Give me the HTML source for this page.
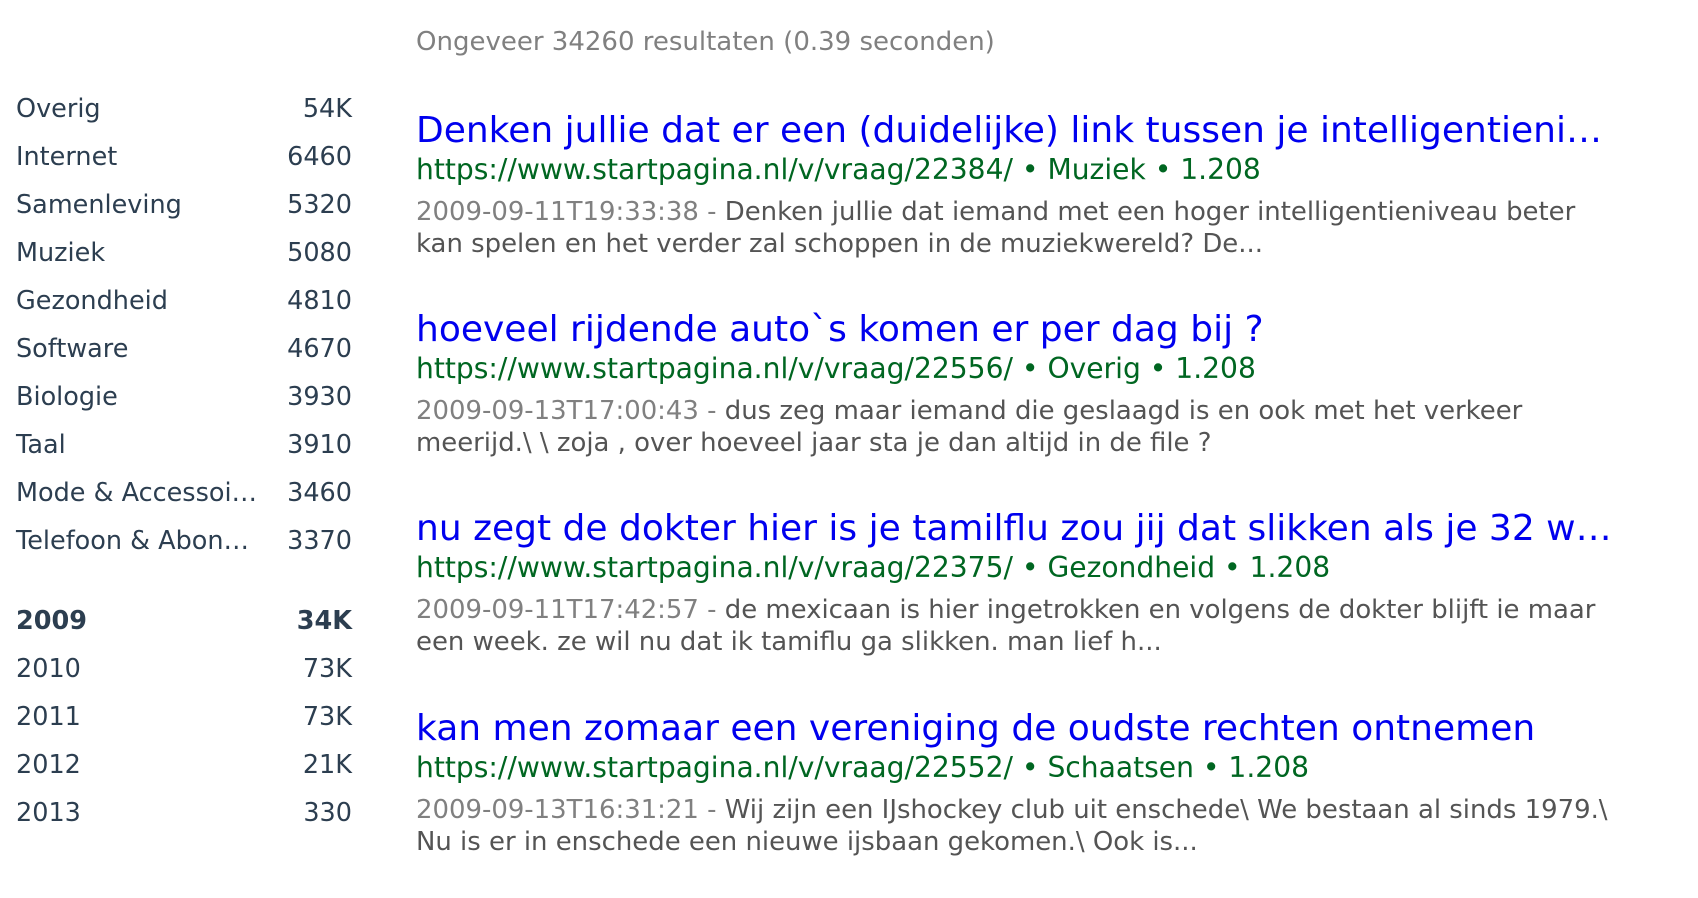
<!DOCTYPE html>
<html><head><meta charset="utf-8"><style>
html,body{margin:0;padding:0;background:#fff;width:1698px;height:898px;overflow:hidden;font-family:"DejaVu Sans","Liberation Sans",sans-serif;}
.l{position:absolute;left:16px;width:336px;height:40px;line-height:40px;font-size:25.5px;color:#2c3e50;}
.l span{position:absolute;right:0;top:0}
.b{font-weight:bold}
.hd{position:absolute;left:416px;top:24px;line-height:36px;font-size:26px;color:#808080;white-space:nowrap}
.r{position:absolute;left:416px;width:1204px}
.t{font-size:36px;color:#0000ee;line-height:44px;height:44px;white-space:nowrap;overflow:hidden;text-overflow:ellipsis}
.u{font-size:28.15px;color:#006621;line-height:36px;margin-top:-1px;white-space:nowrap}
.s{font-size:25.93px;color:#545454;line-height:31.5px;margin-top:9px;white-space:nowrap}
.s i{font-style:normal;color:#808080}
</style></head><body>
<div class="hd">Ongeveer 34260 resultaten (0.39 seconden)</div>

<div class="l" style="top:89px">Overig<span>54K</span></div>
<div class="l" style="top:137px">Internet<span>6460</span></div>
<div class="l" style="top:185px">Samenleving<span>5320</span></div>
<div class="l" style="top:233px">Muziek<span>5080</span></div>
<div class="l" style="top:281px">Gezondheid<span>4810</span></div>
<div class="l" style="top:329px">Software<span>4670</span></div>
<div class="l" style="top:377px">Biologie<span>3930</span></div>
<div class="l" style="top:425px">Taal<span>3910</span></div>
<div class="l" style="top:473px">Mode &amp; Accessoi…<span>3460</span></div>
<div class="l" style="top:521px">Telefoon &amp; Abon…<span>3370</span></div>
<div class="l b" style="top:601px">2009<span>34K</span></div>
<div class="l" style="top:649px">2010<span>73K</span></div>
<div class="l" style="top:697px">2011<span>73K</span></div>
<div class="l" style="top:745px">2012<span>21K</span></div>
<div class="l" style="top:793px">2013<span>330</span></div>

<div class="r" style="top:109px">
<div class="t">Denken jullie dat er een (duidelijke) link tussen je intelligentieniveau en muzikaliteit?</div>
<div class="u">https://www.startpagina.nl/v/vraag/22384/ • Muziek • 1.208</div>
<div class="s"><i>2009-09-11T19:33:38 - </i>Denken jullie dat iemand met een hoger intelligentieniveau beter<br>kan spelen en het verder zal schoppen in de muziekwereld? De...</div>
</div>
<div class="r" style="top:308px">
<div class="t">hoeveel rijdende auto`s komen er per dag bij ?</div>
<div class="u">https://www.startpagina.nl/v/vraag/22556/ • Overig • 1.208</div>
<div class="s"><i>2009-09-13T17:00:43 - </i>dus zeg maar iemand die geslaagd is en ook met het verkeer<br>meerijd.\ \ zoja , over hoeveel jaar sta je dan altijd in de file ?</div>
</div>
<div class="r" style="top:507px">
<div class="t">nu zegt de dokter hier is je tamilflu zou jij dat slikken als je 32 weken zwanger bent</div>
<div class="u">https://www.startpagina.nl/v/vraag/22375/ • Gezondheid • 1.208</div>
<div class="s"><i>2009-09-11T17:42:57 - </i>de mexicaan is hier ingetrokken en volgens de dokter blijft ie maar<br>een week. ze wil nu dat ik tamiflu ga slikken. man lief h...</div>
</div>
<div class="r" style="top:707px">
<div class="t">kan men zomaar een vereniging de oudste rechten ontnemen</div>
<div class="u">https://www.startpagina.nl/v/vraag/22552/ • Schaatsen • 1.208</div>
<div class="s"><i>2009-09-13T16:31:21 - </i>Wij zijn een IJshockey club uit enschede\ We bestaan al sinds 1979.\<br>Nu is er in enschede een nieuwe ijsbaan gekomen.\ Ook is...</div>
</div>
</body></html>
